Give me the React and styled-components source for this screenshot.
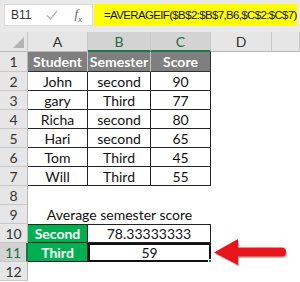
import React from 'react'
import styled, { createGlobalStyle } from 'styled-components';

const Global = createGlobalStyle`
    html, body { margin: 0; padding: 0; background: #fff; }
    * { box-sizing: border-box; }
`;

const Window = styled.div`
    position: relative;
    width: 300px;
    height: 282px;
    overflow: hidden;
    background: #fff;
    font-family: Lato, 'Liberation Sans', sans-serif;
`;

const FormulaBar = styled.div`
    display: flex;
    align-items: stretch;
    gap: 1px;
    height: 32px;
    padding: 4px 0 6px 4px;
    background: #e9e9e9;
`;

const NameBox = styled.div`
    display: flex;
    align-items: center;
    width: 89px;
    padding-left: 6px;
    background: #fff;
    border: 1px solid #dadada;
    font-family: 'Liberation Sans', sans-serif;
    font-size: 12px;
    color: #333;
`;

const Fx = styled.span`
    margin-left: auto;
    margin-right: 10px;
    font-family: 'Liberation Serif', serif;
    font-style: italic;
    font-size: 13px;
    color: #666;
`;

const FormulaText = styled.div`
    flex: 1;
    display: flex;
    align-items: center;
    padding-left: 10px;
    margin-right: 3px;
    background: #ffff00;
    font-family: 'Liberation Sans', sans-serif;
    font-size: 11.5px;
    letter-spacing: -0.65px;
    color: #111;
`;

const Sheet = styled.div`
    display: grid;
    grid-template-columns: 28px 60px 63px 60px 61px 1fr;
    grid-template-rows: 20px 20px repeat(11, 19px);
    font-size: 14px;
`;

const Corner = styled.div`
    position: relative;
    background: #e6e6e6;
    border-right: 1px solid #c8c8c8;
    border-bottom: 1px solid #b8b8b8;
    &::after {
        content: '';
        position: absolute;
        right: 3px;
        bottom: 3px;
        border-style: solid;
        border-width: 0 0 11px 11px;
        border-color: transparent transparent #b4b4b4 transparent;
    }
`;

const ColHead = styled.div`
    display: flex;
    align-items: center;
    justify-content: center;
    background: ${p => p.$sel ? '#d3d3d3' : '#e6e6e6'};
    color: ${p => p.$sel ? '#1e6b40' : '#333'};
    border-right: 1px solid #c8c8c8;
    border-bottom: ${p => p.$sel ? '2px solid #217346' : '1px solid #b8b8b8'};
`;

const RowHead = styled.div`
    display: flex;
    align-items: center;
    justify-content: center;
    background: ${p => p.$sel ? '#d3d3d3' : '#e6e6e6'};
    color: ${p => p.$sel ? '#217346' : '#333'};
    border-right: ${p => p.$sel ? '2px solid #217346' : '1px solid #b8b8b8'};
    border-bottom: 1px solid #c8c8c8;
`;

const kinds = {
    head: 'background:#7f7f7f; color:#fff; font-weight:700; border-right:1px solid #c8c8c8; border-bottom:1px solid #333;',
    data: 'background:#fff; color:#111; border-right:1px solid #222; border-bottom:1px solid #222;',
    green: 'background:#00b050; color:#fff; font-weight:700; border-right:1px solid #222; border-bottom:1px solid #222;',
    sel: 'background:#fff; color:#111; border:2px solid #111;',
    plain: 'background:#fff; color:#111;',
};

const Cell = styled.div`
    position: relative;
    display: flex;
    align-items: center;
    justify-content: center;
    white-space: nowrap;
    grid-column: span ${p => p.$span || 1};
    ${p => kinds[p.$kind || 'plain']}
    ${p => p.$top ? 'border-top:1px solid #222;' : ''}
    ${p => p.$last ? 'border-right:1px solid #333;' : ''}
`;

const Handle = styled.span`
    position: absolute;
    right: -4px;
    bottom: -4px;
    width: 5px;
    height: 5px;
    background: #217346;
    border: 1px solid #fff;
`;

const Arrow = styled.svg`
    position: absolute;
    left: 210px;
    top: 236px;
`;

const rows = [
    ['John', 'second', 90],
    ['gary', 'Third', 77],
    ['Richa', 'second', 80],
    ['Hari', 'second', 65],
    ['Tom', 'Third', 45],
    ['Will', 'Third', 55],
];

function App() {
    return (
        <Window>
            <Global />
            <FormulaBar>
                <NameBox>
                    B11
                    <svg width="12" height="10" viewBox="0 0 12 10" style={{ marginLeft: 15 }}>
                        <path d="M1 5.5 L4.5 9 L11 1" fill="none" stroke="#b5b5b5" strokeWidth="1.3" />
                    </svg>
                    <Fx>f<sub style={{ fontSize: 9 }}>x</sub></Fx>
                </NameBox>
                <FormulaText>=AVERAGEIF($B$2:$B$7,B6,$C$2:$C$7)</FormulaText>
            </FormulaBar>
            <Sheet>
                <Corner />
                <ColHead>A</ColHead>
                <ColHead $sel>B</ColHead>
                <ColHead $sel>C</ColHead>
                <ColHead>D</ColHead>
                <ColHead />

                <RowHead>1</RowHead>
                <Cell $kind="head">Student</Cell>
                <Cell $kind="head">Semester</Cell>
                <Cell $kind="head" $last>Score</Cell>
                <Cell />
                <Cell />

                {rows.map((r, i) => (
                    <React.Fragment key={i}>
                        <RowHead>{i + 2}</RowHead>
                        <Cell $kind="data">{r[0]}</Cell>
                        <Cell $kind="data">{r[1]}</Cell>
                        <Cell $kind="data">{r[2]}</Cell>
                        <Cell />
                        <Cell />
                    </React.Fragment>
                ))}

                <RowHead>8</RowHead>
                <Cell $span={5} />

                <RowHead>9</RowHead>
                <Cell $span={3}>Average semester score</Cell>
                <Cell $span={2} />

                <RowHead>10</RowHead>
                <Cell $kind="green" $top>Second</Cell>
                <Cell $kind="data" $span={2} $top>78.33333333</Cell>
                <Cell $span={2} />

                <RowHead $sel>11</RowHead>
                <Cell $kind="green">Third</Cell>
                <Cell $kind="sel" $span={2}>59<Handle /></Cell>
                <Cell $span={2} />

                <RowHead>12</RowHead>
                <Cell $span={5} />
            </Sheet>
            <Arrow width="80" height="34" viewBox="0 0 80 34">
                <path d="M4 16.5 L28 3 L28 11.5 L72 11.5 Q76 11.5 76 16 Q76 20.5 72 20.5 L28 20.5 L28 29 Z"
                    fill="#9b1010" opacity="0.35" transform="translate(1 1.5)" />
                <path d="M4 16.5 L28 3 L28 11.5 L72 11.5 Q76 11.5 76 16 Q76 20.5 72 20.5 L28 20.5 L28 29 Z"
                    fill="#e8141c" />
            </Arrow>
        </Window>
    );
}

export default App;
